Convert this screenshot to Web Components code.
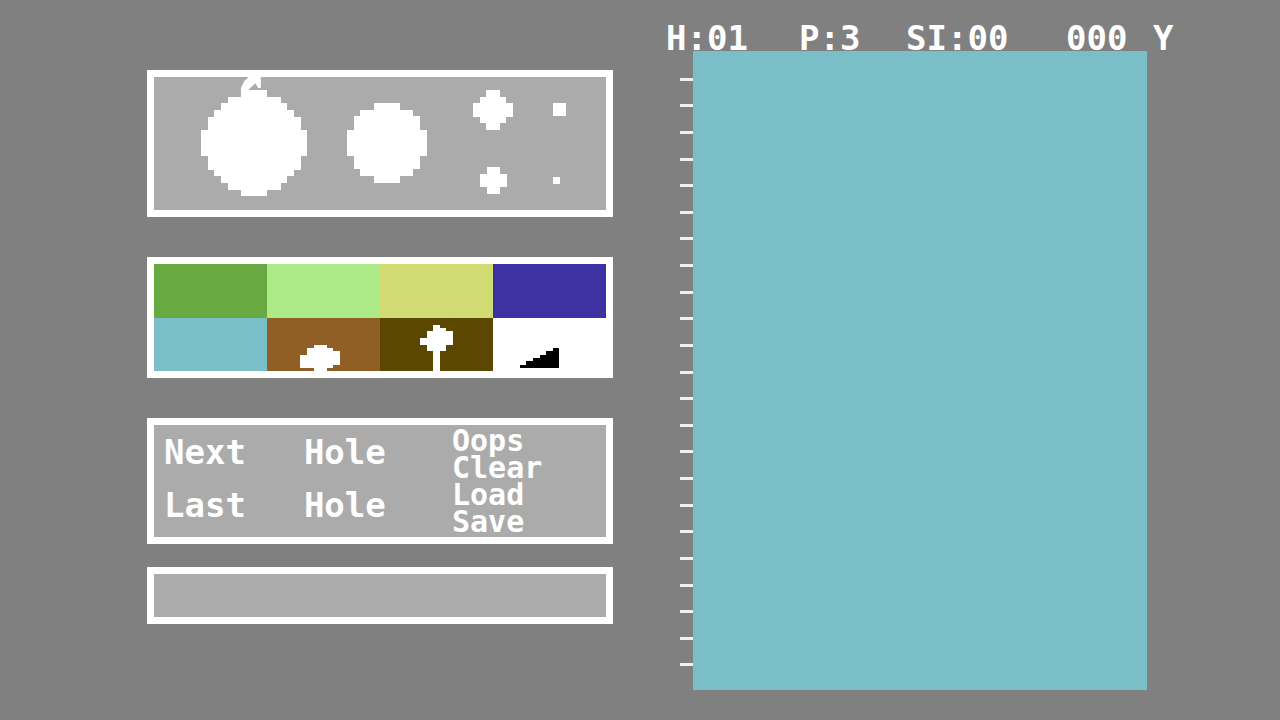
<!DOCTYPE html>
<html lang="en">
<head>
<meta charset="utf-8">
<meta name="viewport" content="width=device-width, initial-scale=1">
<title>Golf Course Editor</title>
<style>
  body {
    margin: 0;
    background: #808080;
    color: #fff;
    font: bold 34px/27px "DejaVu Sans Mono", "Liberation Mono", monospace;
  }
</style>
</head>
<body>
<course-editor></course-editor>

<script>
// Sprites are lists of [row, from, to] runs, or [row, from, to, rows].
const toPath = (runs) =>
  runs.map(([y, from, to, h = 1]) => `M${from} ${y}H${to}v${h}H${from}z`).join('');

const BRUSHES = {
  16: [[0, 6, 10], [1, 4, 12], [2, 3, 13], [3, 2, 14], [4, 1, 15, 2], [6, 0, 16, 4],
    [10, 1, 15, 2], [12, 2, 14], [13, 3, 13], [14, 4, 12], [15, 6, 10]],
  12: [[0, 4, 8], [1, 2, 10], [2, 1, 11, 2], [4, 0, 12, 4], [8, 1, 11, 2], [10, 2, 10], [11, 4, 8]],
  6: [[0, 2, 4], [1, 1, 5], [2, 0, 6, 2], [4, 1, 5], [5, 2, 4]],
  4: [[0, 1, 3], [1, 0, 4, 2], [3, 1, 3]],
  2: [[0, 0, 2, 2]],
  1: [[0, 0, 1]],
};

const SPRITES = {
  bush: [[8, 14, 18], [9, 12, 20], [10, 12, 22], [11, 10, 22, 3], [14, 10, 20], [15, 14, 18]],
  tree: [[2, 16, 18], [3, 16, 20], [4, 14, 22, 2], [6, 12, 22, 2], [8, 14, 20, 2], [10, 16, 18, 6]],
  ramp: [[9, 18, 20], [10, 16, 20], [11, 14, 20], [12, 12, 20], [13, 10, 20], [14, 8, 20]],
};

const BUTTON_RESET = `
  button {
    display: block;
    width: 100%;
    padding: 0;
    border: 0;
    background: none;
    color: inherit;
    font: inherit;
    text-align: left;
    cursor: pointer;
  }
  svg { display: block; width: 100%; height: auto; }
`;

class EditorPanel extends HTMLElement {
  constructor() {
    super();
    this.attachShadow({ mode: 'open' });
    this.shadowRoot.innerHTML = `
      <style>
        :host { display: block; border: 7px solid #fff; background: #ababab; }
      </style>
      <slot></slot>
    `;
  }
}
customElements.define('editor-panel', EditorPanel);

class BrushButton extends HTMLElement {
  constructor() {
    super();
    this.attachShadow({ mode: 'open' });
  }

  connectedCallback() {
    const size = this.getAttribute('size');
    const pointer = this.hasAttribute('pointed')
      ? '<path shape-rendering="auto" d="M7.2-2H9V-.3H8.6L8.2-1L7.4-.3L7 .2H6V-.3L6.5-1.3z"/>'
      : '';
    this.shadowRoot.innerHTML = `
      <style>
        :host { display: block; }
        ${BUTTON_RESET}
        svg { overflow: visible; }
      </style>
      <button type="button" aria-label="Brush ${size}">
        <svg viewBox="0 0 ${size} ${size}" fill="#fff" shape-rendering="crispEdges" aria-hidden="true">
          <path d="${toPath(BRUSHES[size])}"/>${pointer}
        </svg>
      </button>
    `;
  }
}
customElements.define('brush-button', BrushButton);

class BrushPicker extends HTMLElement {
  constructor() {
    super();
    this.attachShadow({ mode: 'open' });
    this.shadowRoot.innerHTML = `
      <style>
        :host {
          display: grid;
          grid-template-columns: 7fr 16fr 6fr 12fr 7fr 6fr 6fr 2fr 6fr;
          padding: 13px 0 14px;
          align-items: center;
        }
        .large { grid-column: 2; }
        .medium { grid-column: 4; }
        .stack {
          grid-column: 6;
          align-self: stretch;
          display: flex;
          flex-direction: column;
          justify-content: space-between;
          align-items: center;
          padding-bottom: 3px;
        }
        .stack > :first-child { width: 100%; }
        .stack > :last-child { width: 67%; }
        .dots { grid-column: 8; align-items: flex-start; padding: 13px 0; }
        .dots > :last-child { width: 50%; }
      </style>
      <brush-button class="large" size="16" pointed></brush-button>
      <brush-button class="medium" size="12"></brush-button>
      <div class="stack">
        <brush-button size="6"></brush-button>
        <brush-button size="4"></brush-button>
      </div>
      <div class="stack dots">
        <brush-button size="2"></brush-button>
        <brush-button size="1"></brush-button>
      </div>
    `;
  }
}
customElements.define('brush-picker', BrushPicker);

class TerrainSwatch extends HTMLElement {
  constructor() {
    super();
    this.attachShadow({ mode: 'open' });
  }

  connectedCallback() {
    const sprite = SPRITES[this.getAttribute('sprite')] || [];
    this.shadowRoot.innerHTML = `
      <style>
        :host { display: block; background: ${this.getAttribute('color')}; }
        ${BUTTON_RESET}
      </style>
      <button type="button" aria-label="${this.getAttribute('name')}">
        <svg viewBox="0 0 34 16" fill="${this.getAttribute('ink') || '#fff'}" shape-rendering="crispEdges" aria-hidden="true">
          <path d="${toPath(sprite)}"/>
        </svg>
      </button>
    `;
  }
}
customElements.define('terrain-swatch', TerrainSwatch);

class TerrainPalette extends HTMLElement {
  constructor() {
    super();
    this.attachShadow({ mode: 'open' });
    this.shadowRoot.innerHTML = `
      <style>
        :host { display: grid; grid-template-columns: repeat(4, 1fr); background: #fff; }
      </style>
      <terrain-swatch name="Fairway" color="#68a941"></terrain-swatch>
      <terrain-swatch name="Green" color="#acea88"></terrain-swatch>
      <terrain-swatch name="Sand" color="#d0dc71"></terrain-swatch>
      <terrain-swatch name="Water" color="#3e31a2"></terrain-swatch>
      <terrain-swatch name="Rough" color="#7abfc7"></terrain-swatch>
      <terrain-swatch name="Bush" color="#905f25" sprite="bush"></terrain-swatch>
      <terrain-swatch name="Tree" color="#5c4700" sprite="tree"></terrain-swatch>
      <terrain-swatch name="Slope" color="#fff" sprite="ramp" ink="#000"></terrain-swatch>
    `;
  }
}
customElements.define('terrain-palette', TerrainPalette);

class EditorMenu extends HTMLElement {
  constructor() {
    super();
    this.attachShadow({ mode: 'open' });
    this.shadowRoot.innerHTML = `
      <style>
        :host { display: grid; grid-template-columns: 298fr 154fr; padding: 2px 0; }
        ${BUTTON_RESET}
        .holes { display: grid; gap: 26px; align-content: start; padding: 12px 0 0 10px; }
        .holes button { display: flex; gap: 58px; }
        .commands { font-size: 30px; }
      </style>
      <div class="holes">
        <button type="button"><span>Next</span> <span>Hole</span></button>
        <button type="button"><span>Last</span> <span>Hole</span></button>
      </div>
      <div class="commands">
        <button type="button">Oops</button>
        <button type="button">Clear</button>
        <button type="button">Load</button>
        <button type="button">Save</button>
      </div>
    `;
  }
}
customElements.define('editor-menu', EditorMenu);

class HoleStatus extends HTMLElement {
  constructor() {
    super();
    this.attachShadow({ mode: 'open' });
    this.shadowRoot.innerHTML = `
      <style>
        :host {
          display: grid;
          grid-template-columns: 133fr 107fr 160fr 87fr 23fr;
          line-height: 25px;
          white-space: nowrap;
        }
      </style>
      <slot></slot>
    `;
  }
}
customElements.define('hole-status', HoleStatus);

class HoleMap extends HTMLElement {
  constructor() {
    super();
    this.attachShadow({ mode: 'open' });
    this.shadowRoot.innerHTML = `
      <style>
        :host { display: grid; grid-template-columns: 14fr 13fr 454fr 29fr; }
        .ruler { grid-column: 2; display: grid; grid-auto-rows: 1fr; }
        .ruler i + i { border-top: 3px solid #f0f0f0; }
        .turf { grid-column: 3; background: #7abfc7; }
      </style>
      <div class="ruler" aria-hidden="true">${'<i></i>'.repeat(24)}</div>
      <div class="turf" role="img" aria-label="Hole map"></div>
    `;
  }
}
customElements.define('hole-map', HoleMap);

class CourseEditor extends HTMLElement {
  constructor() {
    super();
    this.attachShadow({ mode: 'open' });
    this.shadowRoot.innerHTML = `
      <style>
        :host {
          display: grid;
          grid-template-columns: 147fr 466fr 53fr 510fr 104fr;
          min-height: 100vh;
        }
        .tools {
          grid-column: 2;
          display: flex;
          flex-direction: column;
          gap: 40px;
          padding-top: 70px;
        }
        .message { margin-top: -17px; }
        output { display: block; height: 43px; }
        .hole {
          grid-column: 4;
          display: flex;
          flex-direction: column;
          padding: 26px 0 30px;
        }
        hole-map { flex: 1; }
      </style>
      <div class="tools">
        <editor-panel><brush-picker></brush-picker></editor-panel>
        <editor-panel><terrain-palette></terrain-palette></editor-panel>
        <editor-panel><editor-menu></editor-menu></editor-panel>
        <editor-panel class="message"><output aria-label="Message"></output></editor-panel>
      </div>
      <main class="hole">
        <hole-status>
          <span>H:01</span>
          <span>P:3</span>
          <span>SI:00</span>
          <span>000</span>
          <span>Y</span>
        </hole-status>
        <hole-map></hole-map>
      </main>
    `;
  }
}
customElements.define('course-editor', CourseEditor);
</script>
</body>
</html>
